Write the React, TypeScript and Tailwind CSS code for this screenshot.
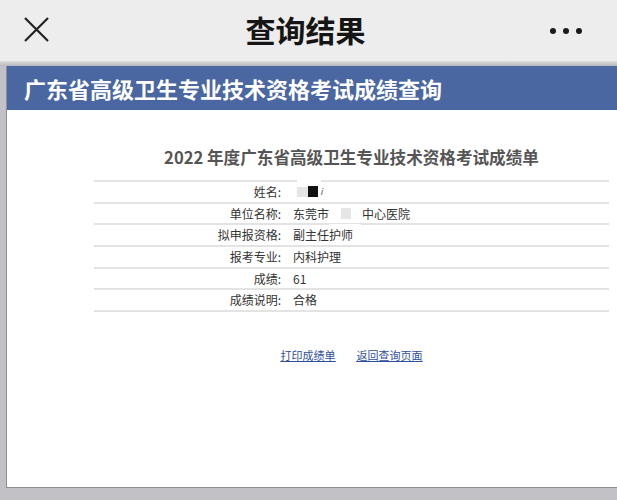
const font = { fontFamily: '"Noto Sans CJK SC", "Noto Sans", sans-serif' };

const rows: { label: string; value: React.ReactNode }[] = [
  {
    label: "姓名",
    value: (
      <span className="relative flex items-center">
        <span className="absolute -top-[5px] left-[4px] h-[4px] w-[24px] bg-white" />
        <span className="ml-[4px] h-[10px] w-[11px] bg-[#e4e4e4]" />
        <span className="h-[11px] w-[10px] bg-[#111]" />
        <span className="ml-[3px] -skew-x-12 text-[9px] text-[#555]">i</span>
      </span>
    ),
  },
  {
    label: "单位名称",
    value: (
      <span className="relative flex items-center">
        <span>东莞市</span>
        <span className="ml-[12px] h-[11px] w-[10px] bg-[#e6e6e6]" />
        <span className="absolute -bottom-[6px] left-[36px] h-[5px] w-[32px] bg-white" />
        <span className="ml-[11px]">中心医院</span>
      </span>
    ),
  },
  { label: "拟申报资格", value: "副主任护师" },
  { label: "报考专业", value: "内科护理" },
  { label: "成绩", value: "61" },
  { label: "成绩说明", value: "合格" },
];

function TopBar() {
  return (
    <header className="grid h-[61px] grid-cols-[1fr_auto_1fr] items-center bg-[#ededed]">
      <div className="pl-[23px]">
        <svg width="27" height="27" viewBox="0 0 27 27" className="-mt-[2px]">
          <path d="M2 2 L25 25 M25 2 L2 25" stroke="#222" strokeWidth="2.2" fill="none" />
        </svg>
      </div>
      <h1 className="-mt-[3px] -ml-[6px] text-[30px] font-bold leading-none text-[#151515]">查询结果</h1>
      <div className="flex justify-end gap-[7px] pr-[35px]">
        <span className="h-[6px] w-[6px] rounded-full bg-[#1a1a1a]" />
        <span className="h-[6px] w-[6px] rounded-full bg-[#1a1a1a]" />
        <span className="h-[6px] w-[6px] rounded-full bg-[#1a1a1a]" />
      </div>
    </header>
  );
}

export default function App() {
  return (
    <div className="flex h-[500px] w-[617px] flex-col overflow-hidden bg-[#b7b7bb]" style={font}>
      <TopBar />
      <div className="h-[5px] bg-gradient-to-b from-[#dcdcdc] to-[#b9b9bd]" />
      <div className="flex flex-1 bg-[#c2c2c6] pb-[12px] pl-[6px]">
        <main className="flex flex-1 flex-col border-b border-l border-[#8e8e92] bg-white">
          <div className="flex h-[44px] items-center bg-[#4a67a2] pl-[17px] text-[22px] font-bold text-white">
            广东省高级卫生专业技术资格考试成绩查询
          </div>
          <div className="ml-[87px] w-[515px]">
            <h2 className="mt-[35px] text-center text-[16.6px] font-bold leading-[24px] text-[#555]">
              2022 年度广东省高级卫生专业技术资格考试成绩单
            </h2>
            <div className="mt-[11px] border-t-2 border-[#e3e3e3]">
              {rows.map((r) => (
                <div key={r.label} className="flex h-[21.7px] items-center border-b-2 border-[#e3e3e3] text-[12px] text-[#333]">
                  <span className="w-[187px] text-right">{r.label}:</span>
                  <span className="pl-[12px]">{r.value}</span>
                </div>
              ))}
            </div>
            <div className="mt-[35px] flex justify-center gap-[21px] text-[11px] text-[#2f4f9e] underline">
              <a>打印成绩单</a>
              <a>返回查询页面</a>
            </div>
          </div>
        </main>
      </div>
    </div>
  );
}
